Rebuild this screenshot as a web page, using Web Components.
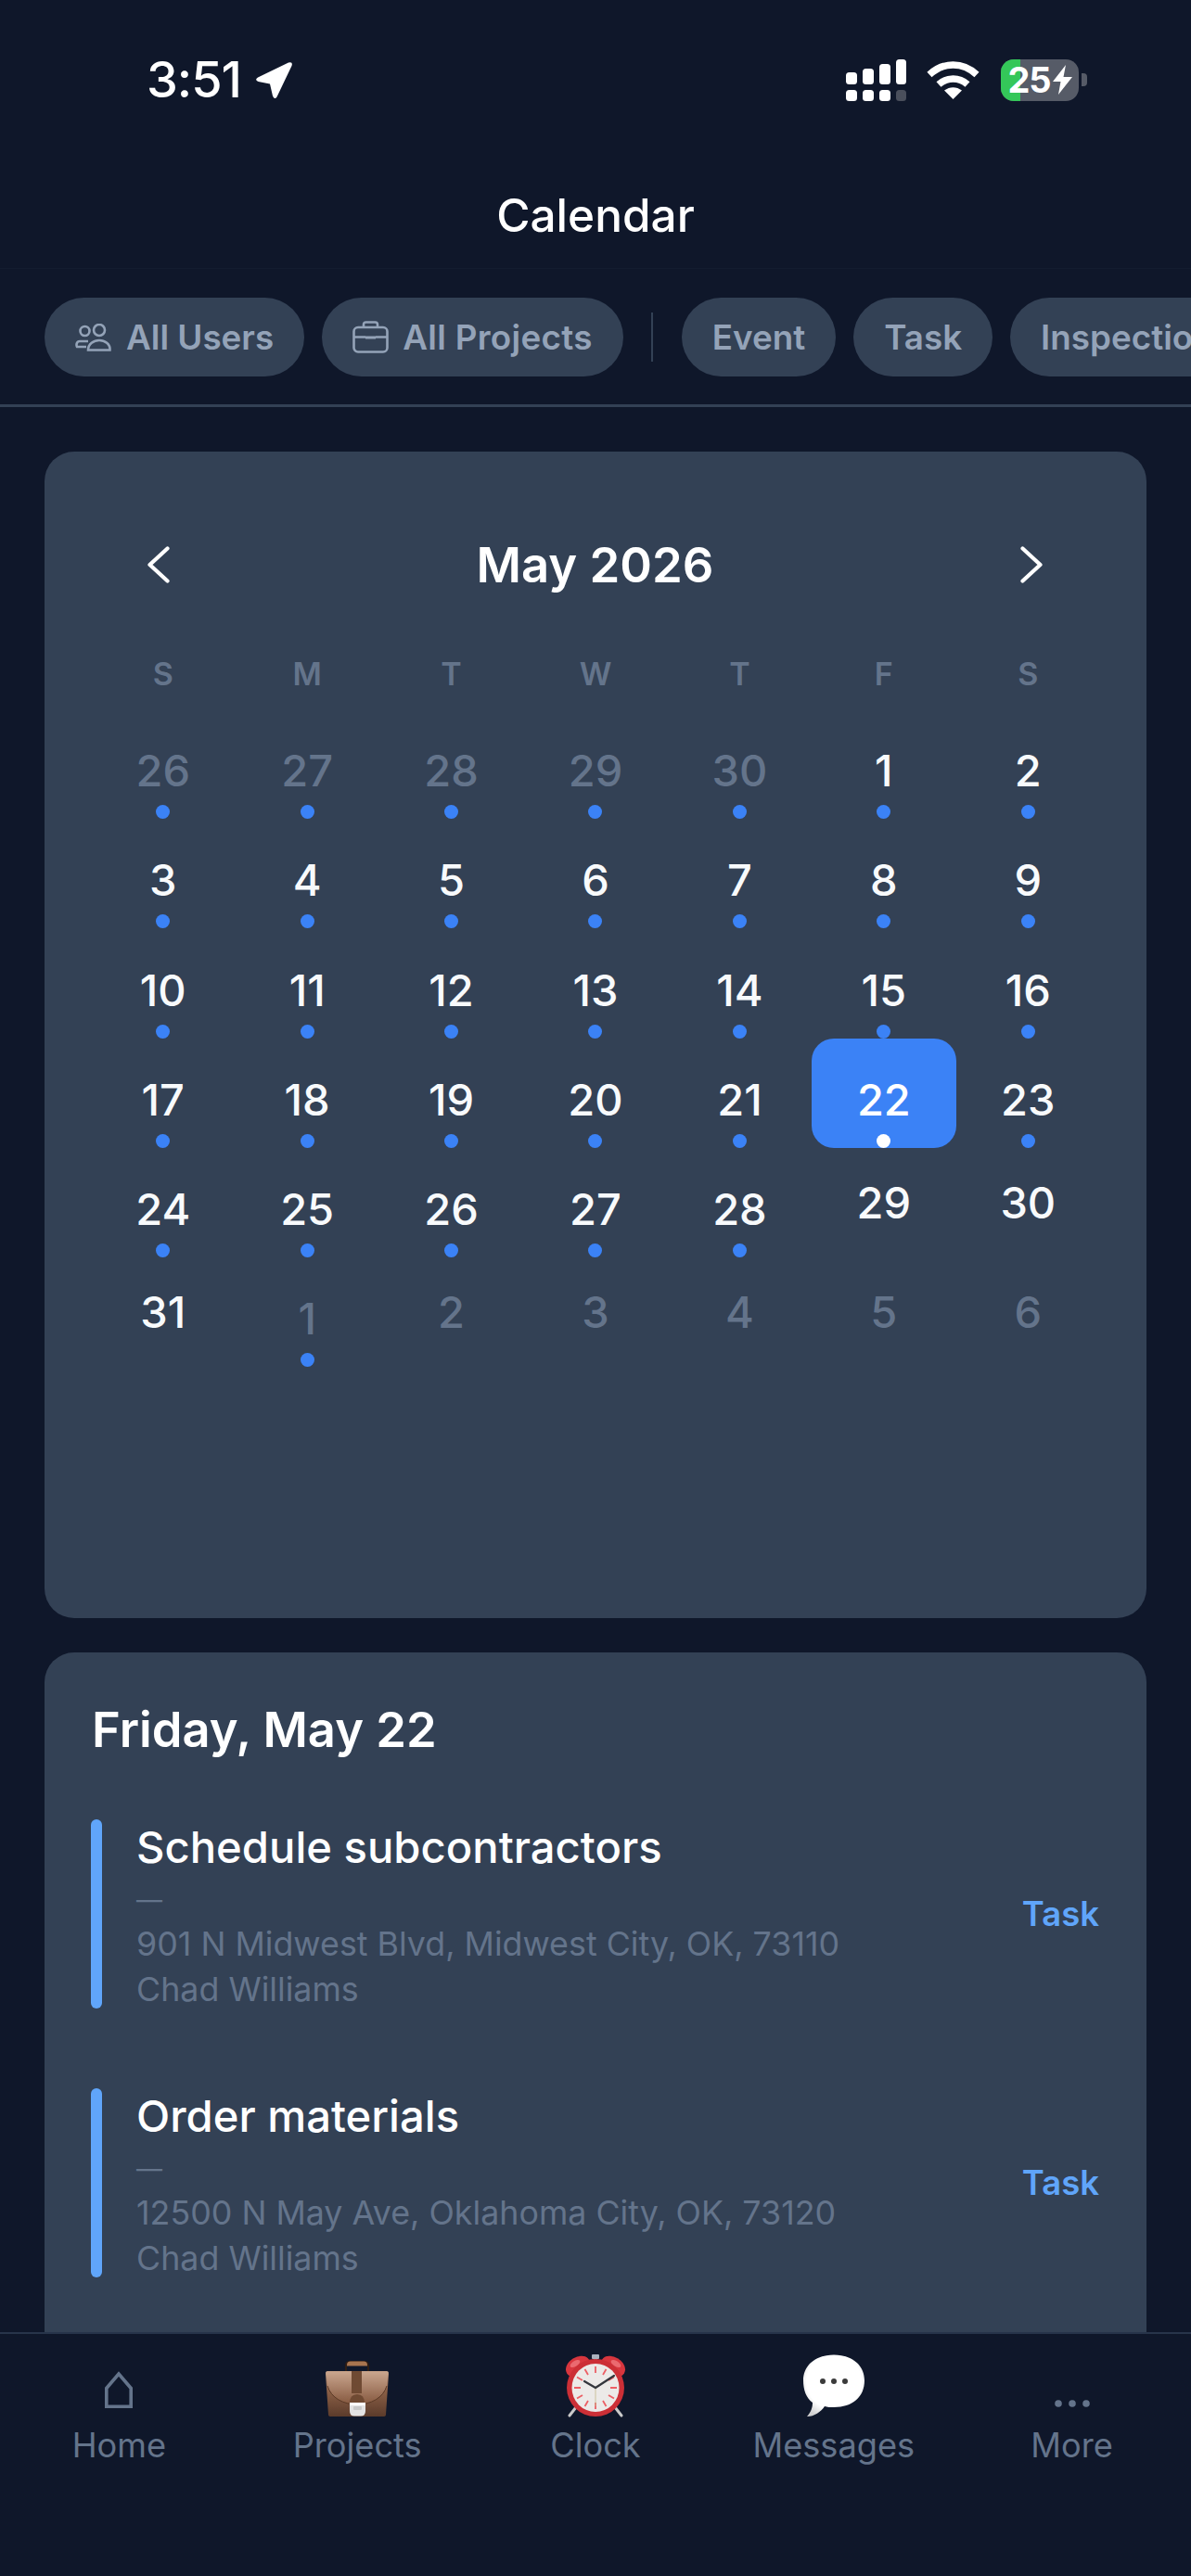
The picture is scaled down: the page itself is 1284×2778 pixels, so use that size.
<!DOCTYPE html>
<html>
<head>
<meta charset="utf-8">
<title>Calendar</title>
<style>
    html, body { margin: 0; height: 100%; background: #0f172a; }
    body { font-family: Inter, "Noto Sans", sans-serif; color: #f8fafc; overflow: hidden; }
    app-shell { height: 2778px; }
</style>
</head>
<body>
<app-shell>
    <status-bar slot="top"></status-bar>
    <page-title slot="top">Calendar</page-title>
    <filter-strip slot="top">
        <filter-chip icon="users">All Users</filter-chip>
        <filter-chip icon="case">All Projects</filter-chip>
        <span class="sep" style="flex:none;width:2px;height:53px;margin:16px 12px 0 11px;background:#334155"></span>
        <filter-chip>Event</filter-chip>
        <filter-chip>Task</filter-chip>
        <filter-chip>Inspection</filter-chip>
    </filter-strip>

    <month-card month="May 2026"></month-card>

    <day-card heading="Friday, May 22">
        <event-row title="Schedule subcontractors" address="901 N Midwest Blvd, Midwest City, OK, 73110" person="Chad Williams" kind="Task"></event-row>
        <event-row title="Order materials" address="12500 N May Ave, Oklahoma City, OK, 73120" person="Chad Williams" kind="Task"></event-row>
    </day-card>

    <tab-bar slot="bottom">
        <tab-item label="Home" icon="home"></tab-item>
        <tab-item label="Projects" icon="briefcase"></tab-item>
        <tab-item label="Clock" icon="clock"></tab-item>
        <tab-item label="Messages" icon="bubble"></tab-item>
        <tab-item label="More" icon="more"></tab-item>
    </tab-bar>
</app-shell>

<script>
// small helper, every element here just sets its own shadow html
class Base extends HTMLElement {
    constructor () {
        super();
        this._shadowRoot = this.attachShadow({ mode: 'open' });
    }
    connectedCallback () {
        this._shadowRoot.innerHTML = this.html();
    }
}

class AppShell extends Base {
    html () {
        return `
        <style>
            :host { display: flex; flex-direction: column; overflow: hidden; }
            .scroll { flex: 1; min-height: 0; overflow: hidden; padding: 48px 48px 0; display: flex; flex-direction: column; gap: 37px; }
        </style>
        <slot name="top"></slot>
        <div class="scroll"><slot></slot></div>
        <slot name="bottom"></slot>`;
    }
}

class StatusBar extends Base {
    html () {
        return `
        <style>
            :host { display: flex; align-items: center; height: 172px; box-sizing: border-box; padding: 0 112px 0 158px; color: #fff; }
            .time { font-size: 54px; font-weight: 500; letter-spacing: -1px; line-height: 1; }
            .arrow { margin-left: 15px; }
            .right { margin-left: auto; display: flex; align-items: center; gap: 22px; }
            .batt { position: relative; width: 84px; height: 45px; border-radius: 14px; overflow: hidden; background: #565b67; display: flex; align-items: center; justify-content: center; gap: 2px;
                font-size: 38px; font-weight: 700; letter-spacing: -1px; }
            .fill { position: absolute; left: 0; top: 0; bottom: 0; width: 21px; background: #34c759; }
            .batt span, .batt svg { position: relative; }
            .wrap { display: flex; align-items: center; gap: 3px; margin-left: 1px; }
            .nub { width: 6px; height: 14px; background: #565b67; border-radius: 0 4px 4px 0; }
        </style>
        <span class="time">3:51</span>
        <svg class="arrow" width="41" height="41" viewBox="0 0 41 41"><path d="M3 17.5 36 1.5Q41 0 39.5 5L23.5 38.5Q21 42 19 37.5L16 24.5 3.5 22Q-1 20 3 17.5Z" fill="#fff"/></svg>
        <div class="right">
            <svg width="65" height="45" viewBox="0 0 65 45" fill="#fff">
                <rect x="0" y="14" width="12" height="13" rx="3.5"/><rect x="18" y="10" width="12" height="17" rx="3.5"/><rect x="36" y="5" width="12" height="22" rx="3.5"/><rect x="54" y="0" width="11" height="27" rx="3.5"/>
                <rect x="0" y="33" width="12" height="12" rx="3.5"/><rect x="18" y="33" width="12" height="12" rx="3.5"/><rect x="36" y="33" width="12" height="12" rx="3.5"/><rect x="54" y="33" width="11" height="12" rx="3.5" fill="#4a4f5c"/>
            </svg>
            <svg width="57" height="41" viewBox="0 0 57 41" fill="none" stroke="#fff" stroke-width="7.5">
                <path d="M3 14.5C18 .5 39 .5 54 14.5"/><path d="M13 25C22 17 35 17 44 25"/><path d="M19 31.5 28.5 41 38 31.5C32 27 25 27 19 31.5Z" fill="#fff" stroke="none"/>
            </svg>
            <div class="wrap">
                <div class="batt"><i class="fill"></i><span>25</span><svg width="21" height="32" viewBox="0 0 21 32"><path d="M14 0 0 18H8.5L6 32 21 13H11.5Z" fill="#fff"/></svg></div>
                <i class="nub"></i>
            </div>
        </div>`;
    }
}

class PageTitle extends Base {
    html () {
        return `
        <style>
            :host { display: flex; justify-content: center; align-items: center; height: 118px; box-sizing: border-box; padding-top: 3px; font-size: 49.5px; font-weight: 500; color: #fff; border-bottom: 1px solid #131c2f; }
        </style>
        <slot></slot>`;
    }
}

class FilterStrip extends Base {
    html () {
        return `
        <style>
            :host { display: flex; align-items: flex-start; gap: 19px; height: 149px; box-sizing: border-box; padding: 31px 0 0 48px; border-bottom: 3px solid #334155; overflow: hidden; }
        </style>
        <slot></slot>`;
    }
}

const chipIcons = {
    users: `<svg width="40" height="30" viewBox="0 0 40 30" fill="none" stroke="#94a3b8" stroke-width="2.6">
        <circle cx="10.5" cy="8" r="5"/><circle cx="26" cy="7" r="6"/>
        <path d="M14 19H5C1.5 19 1 23 2 25H12"/><path d="M14 28.5H37.5C38 22 32 18 26 18S14 22 14 28.5Z"/></svg>`,
    case: `<svg width="39" height="35" viewBox="0 0 39 35" fill="none" stroke="#94a3b8" stroke-width="2.6">
        <path d="M12 7V4Q12 1.5 14.5 1.5H24.5Q27 1.5 27 4V7"/><rect x="1.5" y="7" width="36" height="26.5" rx="4.5"/>
        <path d="M1.5 17.5H14M25 17.5H37.5"/><path d="M14 16.5H25V19.5H14Z" fill="#94a3b8" stroke="none"/></svg>`
};

class FilterChip extends Base {
    html () {
        const icon = chipIcons[this.getAttribute('icon')] || '';
        return `
        <style>
            :host { display: flex; flex: none; align-items: center; gap: 15px; height: 85px; box-sizing: border-box; padding: 0 33px; border-radius: 43px; background: #334155;
                color: #94a3b8; font-size: 36.8px; font-weight: 600; white-space: nowrap; }
            :host([icon="case"]) { letter-spacing: .3px; }
        </style>
        ${icon}<span><slot></slot></span>`;
    }
}

class MonthCard extends Base {
    html () {
        const names = ['S', 'M', 'T', 'W', 'T', 'F', 'S'];
        // [number, muted, dot, selected]
        const cells = [];
        [26, 27, 28, 29, 30].forEach(n => cells.push([n, 1, 1]));
        for (let n = 1; n <= 28; n++) cells.push([n, 0, 1, n === 22 ? 1 : 0]);
        cells.push([29, 0, 0], [30, 0, 0], [31, 0, 0], [1, 1, 1]);
        [2, 3, 4, 5, 6].forEach(n => cells.push([n, 1, 0]));
        const days = cells.map(c => `<cal-day ${c[1] ? 'muted' : ''} ${c[2] ? 'dot' : ''} ${c[3] ? 'selected' : ''}>${c[0]}</cal-day>`).join('');
        return `
        <style>
            :host { display: block; flex: none; height: 1258px; box-sizing: border-box; padding: 90px 50px 0 50px; border-radius: 32px; background: #334155; }
            .head { display: flex; align-items: center; justify-content: space-between; height: 64px; padding: 0 62px 0 61px; }
            .head b { font-size: 52.6px; font-weight: 600; color: #fff; }
            .grid { display: grid; grid-template-columns: repeat(7, 1fr); }
            .names { height: 78px; margin-top: 46px; align-items: center; }
            .names span { text-align: center; font-size: 34px; font-weight: 600; color: #64748b; }
            .days { grid-auto-rows: 118.2px; }
        </style>
        <div class="head">
            <svg width="24" height="40" viewBox="0 0 24 40" fill="none" stroke="#fff" stroke-width="4.2" stroke-linecap="round" stroke-linejoin="round"><path d="M21.5 2.5 2.5 20 21.5 37.5"/></svg>
            <b>${this.getAttribute('month')}</b>
            <svg width="24" height="40" viewBox="0 0 24 40" fill="none" stroke="#fff" stroke-width="4.2" stroke-linecap="round" stroke-linejoin="round"><path d="M2.5 2.5 21.5 20 2.5 37.5"/></svg>
        </div>
        <div class="grid names">${names.map(n => `<span>${n}</span>`).join('')}</div>
        <div class="grid days">${days}</div>`;
    }
}

class CalDay extends Base {
    html () {
        const dot = this.hasAttribute('dot') ? '<i></i>' : '';
        return `
        <style>
            :host { display: flex; flex-direction: column; align-items: center; justify-content: center; color: #f8fafc; font-size: 47px; font-weight: 500; }
            :host([dot]) { justify-content: flex-end; }
            :host([muted]) { color: #64748b; }
            :host([selected]) { background: #3b82f6; border-radius: 24px; color: #fff; }
            span { line-height: 56px; }
            i { display: block; width: 15px; height: 15px; margin-top: 9px; border-radius: 50%; background: #3b82f6; }
            :host([selected]) i { background: #fff; }
        </style>
        <span><slot></slot></span>${dot}`;
    }
}

class DayCard extends Base {
    html () {
        return `
        <style>
            :host { display: block; flex: none; height: 900px; box-sizing: border-box; padding: 48px 50px 0 50px; border-radius: 32px; background: #334155; }
            h2 { margin: 0 0 62px 1px; font-size: 52.5px; line-height: 70px; font-weight: 600; color: #fff; }
            .list { display: flex; flex-direction: column; gap: 86px; }
        </style>
        <h2>${this.getAttribute('heading')}</h2>
        <div class="list"><slot></slot></div>`;
    }
}

class EventRow extends Base {
    html () {
        return `
        <style>
            :host { display: flex; align-items: center; height: 204px; }
            .bar { flex: none; align-self: stretch; width: 12px; border-radius: 6px; background: #60a5fa; margin-right: 37px; }
            .body { flex: 1; min-width: 0; align-self: flex-start; }
            .title { font-size: 47.2px; line-height: 59px; font-weight: 500; color: #fff; }
            .line { font-size: 35.8px; line-height: 49px; color: #64748b; }
            .dash { font-size: 28px; line-height: 45px; margin-top: 6px; }
            .kind { font-size: 36.5px; font-weight: 600; color: #60a5fa; margin-right: 1px; }
        </style>
        <div class="bar"></div>
        <div class="body">
            <div class="title">${this.getAttribute('title')}</div>
            <div class="line dash">—</div>
            <div class="line">${this.getAttribute('address')}</div>
            <div class="line">${this.getAttribute('person')}</div>
        </div>
        <div class="kind">${this.getAttribute('kind')}</div>`;
    }
}

const tabIcons = {
    home: `<svg width="30" height="40" viewBox="0 0 30 40" fill="none" stroke="#64748b" stroke-width="3.6" style="margin-bottom:10px"><path d="M1.8 38.2V18.5L15 3 28.2 18.5V38.2Z"/></svg>`,
    briefcase: `<svg width="70" height="62" viewBox="0 0 70 62">
        <defs>
            <linearGradient id="lth" x1="0" y1="0" x2="0" y2="1"><stop offset="0" stop-color="#c3a087"/><stop offset=".4" stop-color="#8e6248"/><stop offset="1" stop-color="#5b3b2b"/></linearGradient>
            <linearGradient id="flap" x1="0" y1="0" x2="0" y2="1"><stop offset="0" stop-color="#c9a58d"/><stop offset="1" stop-color="#85583f"/></linearGradient>
        </defs>
        <path d="M23 13V6Q23 2 27 2H43Q47 2 47 6V13" fill="none" stroke="#2e1d14" stroke-width="2"/>
        <path d="M24 5.5Q24 1.5 28 1.5H42Q46 1.5 46 5.5V6.5H24Z" fill="#a8754f"/>
        <path d="M3 12H67Q69 12 69 15L66 59Q66 61 63 61H7Q4 61 4 59L1 15Q1 12 3 12Z" fill="url(#lth)"/>
        <path d="M1.5 13H68.5L67 28C63 41 50 48 35 48S7 41 3 28Z" fill="url(#flap)"/>
        <path d="M3 28C7 41 20 48 35 48S63 41 67 28" fill="none" stroke="#5a3926" stroke-width="1"/>
        <path d="M29 12H40V36H29Z" fill="#6f4a33"/>
        <path d="M27 47Q27 37 35 37T43 47Z" fill="#6f4a33"/>
        <path d="M27 46H44V55Q44 60.5 39 60.5H32Q27 60.5 27 55Z" fill="#e3e3e3"/><path d="M27 46H44V49H27Z" fill="#fff"/><rect x="31" y="50" width="9" height="4" rx="1" fill="#c9c9c9"/>
    </svg>`,
    clock: `<svg width="68" height="69" viewBox="0 0 68 69">
        <path d="M13 58 6 67M55 58 62 67" stroke="#c9c9c9" stroke-width="3" stroke-linecap="round"/>
        <rect x="30" y="1" width="8" height="5" rx="1" fill="#aab1bd"/>
        <path d="M33 6V10M35 6V10" stroke="#8b8f98" stroke-width="2"/>
        <ellipse cx="15" cy="14" rx="14" ry="10" transform="rotate(-32 15 14)" fill="#d8363e"/>
        <ellipse cx="53" cy="14" rx="14" ry="10" transform="rotate(32 53 14)" fill="#d8363e"/>
        <ellipse cx="12" cy="11" rx="6" ry="3" transform="rotate(-32 12 11)" fill="#ea6a70"/>
        <ellipse cx="56" cy="11" rx="6" ry="3" transform="rotate(32 56 11)" fill="#ea6a70"/>
        <ellipse cx="34" cy="37" rx="31" ry="31" fill="#cc2f36"/>
        <ellipse cx="34" cy="37" rx="25.5" ry="26" fill="#eceae8"/>
        <g stroke="#ec6066" stroke-width="1.8">
            <path d="M34 14V21M34 53V60M11 37H18M50 37H57M22.5 17 26 23M45.5 17 42 23M22.5 57 26 51M45.5 57 42 51M14 25.5 20 29M54 25.5 48 29M14 48.5 20 45M54 48.5 48 45"/>
        </g>
        <path d="M34 37V57" stroke="#c7b98a" stroke-width=".8"/>
        <path d="M34 37 22 30M34 37 54 24" stroke="#33363c" stroke-width="2.2" stroke-linecap="round"/>
    </svg>`,
    bubble: `<svg width="68" height="68" viewBox="0 0 68 68">
        <defs><radialGradient id="bb" cx=".5" cy=".43" r=".62"><stop offset=".72" stop-color="#fff"/><stop offset="1" stop-color="#d2d2d2"/></radialGradient></defs>
        <path d="M34 .5C54 .5 67 12 67 28 67 46 54 57 34 57 30 57 27 57 24 56 20 62 13 67 5 67 9 62 11 58 11 52 4 47 1 38 1 28 1 12 14 .5 34 .5Z" fill="url(#bb)"/>
        <circle cx="22" cy="29" r="3" fill="#3b3b3b"/><circle cx="34" cy="29" r="3" fill="#3b3b3b"/><circle cx="46" cy="29" r="3" fill="#3b3b3b"/>
    </svg>`,
    more: `<svg width="38" height="8" viewBox="0 0 38 8" fill="#64748b" style="margin-bottom:11px"><circle cx="4" cy="4" r="3.8"/><circle cx="19" cy="4" r="3.8"/><circle cx="34" cy="4" r="3.8"/></svg>`
};

class TabBar extends Base {
    html () {
        return `
        <style>
            :host { display: grid; grid-template-columns: repeat(5, 1fr); height: 263px; box-sizing: border-box; padding-top: 22px; background: #0f172a; border-top: 2px solid #27344a; }
        </style>
        <slot></slot>`;
    }
}

class TabItem extends Base {
    html () {
        return `
        <style>
            :host { display: flex; flex-direction: column; align-items: center; color: #64748b; font-size: 36.2px; }
            .icon { height: 68px; display: flex; align-items: flex-end; justify-content: center; }
            .label { margin-top: 8px; line-height: 44px; }
        </style>
        <div class="icon">${tabIcons[this.getAttribute('icon')]}</div>
        <div class="label">${this.getAttribute('label')}</div>`;
    }
}

self.customElements.define('app-shell', AppShell);
self.customElements.define('status-bar', StatusBar);
self.customElements.define('page-title', PageTitle);
self.customElements.define('filter-strip', FilterStrip);
self.customElements.define('filter-chip', FilterChip);
self.customElements.define('month-card', MonthCard);
self.customElements.define('cal-day', CalDay);
self.customElements.define('day-card', DayCard);
self.customElements.define('event-row', EventRow);
self.customElements.define('tab-bar', TabBar);
self.customElements.define('tab-item', TabItem);
</script>
</body>
</html>
